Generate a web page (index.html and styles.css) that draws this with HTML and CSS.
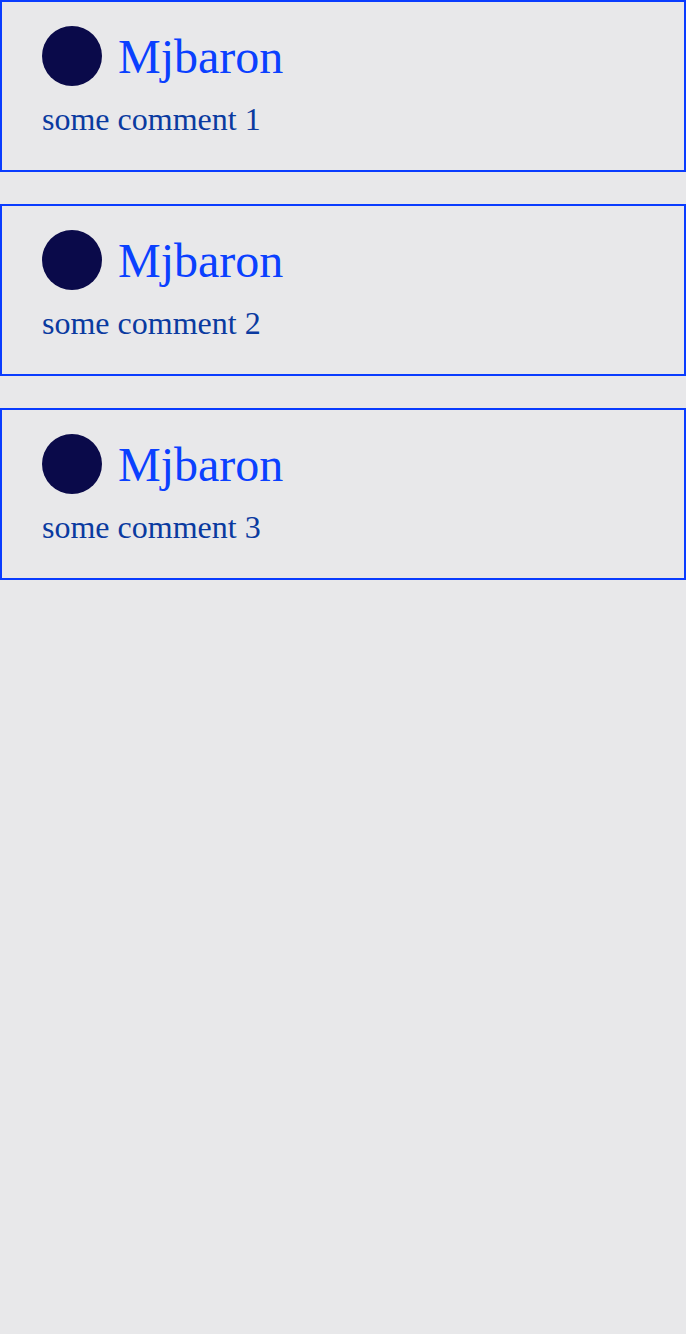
FILE: index.html
```html
<!DOCTYPE html>
<html>
<head>
<meta charset="utf-8">
<link rel="stylesheet" href="styles.css">
</head>
<body>
<div class="list">
  <div class="card">
    <div class="head"><div class="avatar"></div><div class="name">Mjbaron</div></div>
    <div class="comment">some comment 1</div>
  </div>
  <div class="card">
    <div class="head"><div class="avatar"></div><div class="name">Mjbaron</div></div>
    <div class="comment">some comment 2</div>
  </div>
  <div class="card">
    <div class="head"><div class="avatar"></div><div class="name">Mjbaron</div></div>
    <div class="comment">some comment 3</div>
  </div>
</div>
</body>
</html>
```
FILE: styles.css
```css
html, body {
  margin: 0;
  padding: 0;
  background: #e8e8ea;
  font-family: "Liberation Serif", "Times New Roman", serif;
}
.list {
  display: flex;
  flex-direction: column;
  gap: 32px;
}
.card {
  border: 2px solid #0a3cff;
  padding: 24px 40px 32px 40px;
  height: 172px;
  box-sizing: border-box;
}
.head {
  display: flex;
  align-items: center;
  gap: 16px;
  height: 60px;
}
.avatar {
  width: 60px;
  height: 60px;
  border-radius: 50%;
  background: #0a0a4a;
  flex: none;
}
.name {
  font-size: 48px;
  color: #0a40ff;
}
.comment {
  margin-top: 15px;
  font-size: 32px;
  color: #0a3aa0;
}
```
